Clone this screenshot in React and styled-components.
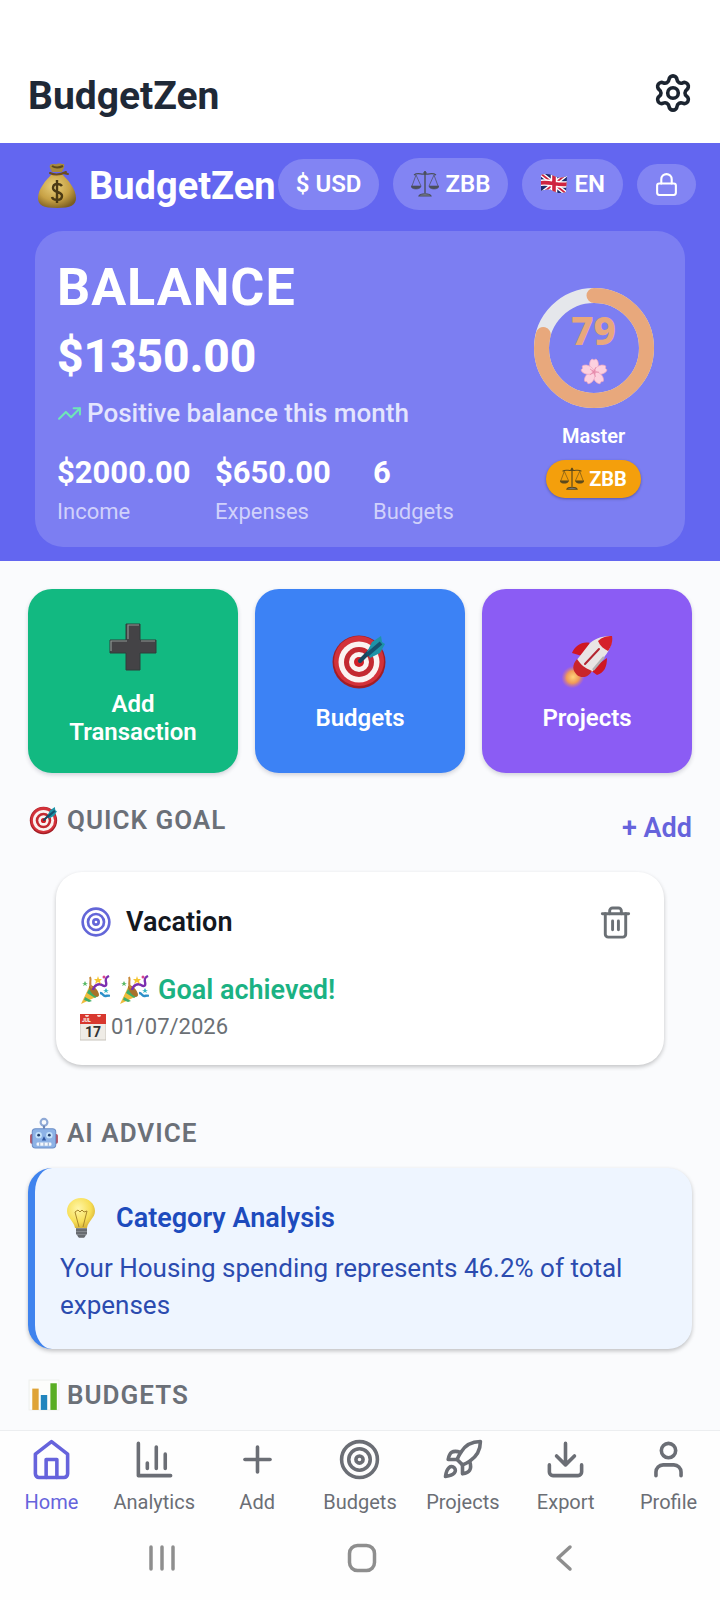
import React from 'react'
import styled, { createGlobalStyle } from 'styled-components'
import { Lock, TrendingUp, Trash2, Target, Plus, Rocket, User } from 'lucide-react'


const actions = [
  { title: 'Add Transaction', color: '#12b981', icon: 'plus' },
  { title: 'Budgets', color: '#3c82f5', icon: 'dart' },
  { title: 'Projects', color: '#8b5cf4', icon: 'rocket' },
];

const stats = [
  { value: '$2000.00', label: 'Income' },
  { value: '$650.00', label: 'Expenses' },
  { value: '6', label: 'Budgets' },
];

const score = 79;

const Line = ({ size = 43, children }) => (
  <svg width={size} height={size} viewBox="0 0 24 24" fill="none" stroke="currentColor"
    strokeWidth="2" strokeLinecap="round" strokeLinejoin="round" aria-hidden="true">
    {children}
  </svg>
)

const HomeIcon = () => (
  <Line>
    <path d="M3 9l9-7 9 7v11a2 2 0 0 1-2 2H5a2 2 0 0 1-2-2z" />
    <path d="M9 22V12h6v10" />
  </Line>
)

const AnalyticsIcon = () => (
  <Line>
    <path d="M3 3v18h18" />
    <path d="M18 17V9M13 17V5M8 17v-3" />
  </Line>
)

const ExportIcon = () => (
  <Line>
    <path d="M21 15v4a2 2 0 0 1-2 2H5a2 2 0 0 1-2-2v-4" />
    <path d="M7 10l5 5 5-5M12 15V3" />
  </Line>
)

const Gear = () => (
  <svg width="42" height="42" viewBox="-21 -21 42 42" fill="none" stroke="currentColor"
    strokeWidth="3.6" strokeLinejoin="round" aria-hidden="true">
    <path d="M-3.98-13.55A4 4 0 0 1 3.98-13.55A4.06 4.06 0 0 0 9.74-10.22A4 4 0 0 1 13.72-3.33A4.06 4.06 0 0 0 13.72 3.33A4 4 0 0 1 9.74 10.22A4.06 4.06 0 0 0 3.98 13.55A4 4 0 0 1-3.98 13.55A4.06 4.06 0 0 0-9.74 10.22A4 4 0 0 1-13.72 3.33A4.06 4.06 0 0 0-13.72-3.33A4 4 0 0 1-9.74-10.22A4.06 4.06 0 0 0-3.98-13.55z" />
    <circle r="5.3" />
  </svg>
)

const tabs = [
  { title: 'Home', icon: <HomeIcon />, active: true },
  { title: 'Analytics', icon: <AnalyticsIcon /> },
  { title: 'Add', icon: <Plus size={43} /> },
  { title: 'Budgets', icon: <Target size={43} /> },
  { title: 'Projects', icon: <Rocket size={43} /> },
  { title: 'Export', icon: <ExportIcon /> },
  { title: 'Profile', icon: <User size={43} /> },
];

const MoneyBag = () => (
  <svg width="40" height="46" viewBox="0 0 40 46" aria-hidden="true">
    <defs>
      <radialGradient id="bag" cx="0.42" cy="0.35" r="0.7">
        <stop offset="0" stopColor="#e9cf7c" />
        <stop offset="0.6" stopColor="#c7a145" />
        <stop offset="1" stopColor="#7d5f22" />
      </radialGradient>
    </defs>
    <path d="M15 11C9 17 1 26 1 35c0 7 5 10 19 10s19-3 19-10c0-9-8-18-14-24z" fill="url(#bag)" />
    <path d="M13 2c3-2 5 0 7-1s4 0 7 0c1 3-1 5-2 8H15c-1-3-3-4-2-7z" fill="#a88a3c" />
    <path d="M15 3c3 2 7 2 11 0" stroke="#5b481c" strokeWidth="2" fill="none" />
    <path d="M13 10c4 2 10 2 16-1M26 10l5 1" stroke="#6c4c20" strokeWidth="2" strokeLinecap="round" fill="none" />
    <path d="M25 23c-2-3-9-3-9 2 0 5 9 3 9 8s-9 5-10 1M20 17v23" stroke="#4c3a14" strokeWidth="2.4" fill="none" />
  </svg>
)

const Scales = ({ size = 28, color = '#4a4f5c' }) => (
  <svg width={size} height={size} viewBox="0 0 28 28" fill="none" stroke={color} aria-hidden="true">
    <path d="M14 1v22" strokeWidth="1.4" />
    <path d="M3 5c4-3 7 0 11-1 4 1 7-2 11 1" strokeWidth="1.2" />
    <path d="M5 5L1 16M5 5l5 11M23 5l-5 11M23 5l4 11" strokeWidth="0.7" />
    <path d="M0 16h10c0 4-10 4-10 0zM18 16h10c0 4-10 4-10 0z" fill={color} strokeWidth="0.6" />
    <path d="M8 26c1-3 11-3 12 0z" fill="#7d828c" strokeWidth="1.2" />
    <circle cx="14" cy="3" r="1.2" fill={color} />
  </svg>
)

const Flag = () => (
  <svg width="28" height="22" viewBox="0 0 28 22" aria-hidden="true">
    <clipPath id="wave">
      <path d="M1 2c5-2 9-1 13 1s8 2 13 0l-1 16c-5 2-9 1-13-1s-7-2-12 0z" />
    </clipPath>
    <g clipPath="url(#wave)">
      <path d="M0 0h28v22H0z" fill="#1d2a6b" />
      <path d="M0 0l28 22M28 0L0 22" stroke="#fff" strokeWidth="4.5" />
      <path d="M0 0l28 22M28 0L0 22" stroke="#cf2440" strokeWidth="1.8" />
      <path d="M14 0v22M0 10c9-2 18 3 28 1" stroke="#fff" strokeWidth="6.5" fill="none" />
      <path d="M14 0v22M0 10c9-2 18 3 28 1" stroke="#cf2440" strokeWidth="3.6" fill="none" />
    </g>
  </svg>
)

const Blossom = () => (
  <svg width="28" height="28" viewBox="0 0 28 28" aria-hidden="true">
    {[0, 72, 144, 216, 288].map((turn) => (
      <path key={turn} d="M14 15C8 10 9 3 12 1l2 1 2-1c3 2 4 9-2 14z"
        fill="#fcd0df" stroke="#f0a9c3" strokeWidth="0.7" transform={`rotate(${turn} 14 14)`} />
    ))}
    <circle cx="14" cy="14" r="2.4" fill="#f5a9c4" />
    {[0, 72, 144, 216, 288].map((turn) => (
      <path key={turn} d="M14 14V9" stroke="#e084a5" strokeWidth="0.7" transform={`rotate(${turn + 20} 14 14)`} />
    ))}
  </svg>
)

const HeavyPlus = () => (
  <svg width="62" height="62" viewBox="0 0 62 62" aria-hidden="true">
    <path d="M24 8h14v16h16v13H38v17H24V37H8V24h16z" fill="#444346" stroke="#2f3f3b" strokeWidth="1" />
    <path d="M26 23V9h11M9 35V25h16M39 25h14" stroke="#8d9692" strokeWidth="1.2" fill="none" />
  </svg>
)

const Dart = ({ size = 62 }) => (
  <svg width={size} height={size} viewBox="0 0 62 62" aria-hidden="true">
    <circle cx="30" cy="32" r="26.5" fill="#a31d25" />
    <circle cx="30" cy="31" r="25" fill="#d3323a" />
    <circle cx="30" cy="32" r="20.5" fill="#fbf3f1" />
    <circle cx="30" cy="32" r="15" fill="#c32a31" />
    <circle cx="30" cy="32" r="10" fill="#fbf3f1" />
    <circle cx="30" cy="32" r="5" fill="#d01f28" />
    <path d="M31 31l17-17" stroke="#17485f" strokeWidth="4" strokeLinecap="round" />
    <path d="M38 22l5-10 9-6 1 6 3 2-5 9-10 5z" fill="#1e93a7" />
    <path d="M38 25L52 13" stroke="#15526f" strokeWidth="4" />
  </svg>
)

const RocketShip = () => (
  <svg width="62" height="62" viewBox="0 0 62 62" aria-hidden="true">
    <defs>
      <radialGradient id="flame">
        <stop offset="0" stopColor="#ffd27a" />
        <stop offset="0.55" stopColor="#f09a58" />
        <stop offset="1" stopColor="#d9748a" stopOpacity="0" />
      </radialGradient>
    </defs>
    <ellipse cx="17" cy="47" rx="12" ry="11" fill="url(#flame)" transform="rotate(-35 17 47)" />
    <path d="M34 13c-8-2-15 3-18 10l10 3zM51 28c0 9-3 15-10 17l-7-5z" fill="#cf1722" />
    <path d="M20 31l14-18c7-6 14-7 22-7 0 7-2 14-7 20L36 42c-6 2-16-4-16-11z" fill="#e9e4e4" />
    <path d="M42 11c4-4 9-5 14-5 1 6-1 11-4 15-4-2-8-5-10-10z" fill="#d5202a" />
    <path d="M21 29c4 6 8 9 15 12-3 6-10 8-15 4-5-5-5-10 0-16z" fill="#c9252c" />
    <path d="M29 34L43 19" stroke="#b32530" strokeWidth="2" strokeLinecap="round" />
    <path d="M37 40l11-13" stroke="#b5b0b3" strokeWidth="2.5" />
  </svg>
)

const Party = () => (
  <svg width="30" height="30" viewBox="0 0 30 30" aria-hidden="true">
    <path d="M10 10L1 29l17-8c-1-5-3-9-8-11z" fill="#efbb3b" />
    <path d="M9 14l-2 4 8 5 3-2zM5 22l-1 3 5 2 3-1z" fill="#3fae68" />
    <ellipse cx="14" cy="16" rx="3" ry="7" transform="rotate(-40 14 16)" fill="#a8722b" />
    <path d="M13 15c1-5 6-7 9-5s5 1 4-3 1-5 3-6" stroke="#7b2fb0" strokeWidth="2.4" fill="none" />
    <path d="M12 13C8 9 12 6 10 2" stroke="#c98a3a" strokeWidth="2" fill="none" />
    <path d="M20 18c3 0 3 3 5 3s3-1 5 0" stroke="#2c8fc9" strokeWidth="2.4" fill="none" />
    <path d="M18 1l1 3h3l-2 2 1 3-3-2-3 2 1-3-2-2h3z" fill="#f5c630" />
    <path d="M5 6l1 2h2L6 9l1 2-2-1-2 1 1-2-2-1h2z" fill="#59b966" />
    <path d="M26 13l1 2h2l-2 1 1 2-2-1-2 1 1-2-2-1h2z" fill="#35b3c0" />
    <circle cx="24" cy="2" r="1.5" fill="#d9468d" />
  </svg>
)

const Calendar = () => (
  <svg width="26" height="27" viewBox="0 0 26 27" aria-hidden="true">
    <path d="M0 1h26v25H0z" fill="#efece6" stroke="#c8c4bc" strokeWidth="1" />
    <path d="M0 0h26v10H0z" fill="#d8382f" />
    <path d="M5 1a2 2 0 0 0 4 0M17 1a2 2 0 0 0 4 0" fill="#f4dcd8" />
    <text x="2" y="8" fill="#fff" fontSize="5" fontWeight="700" fontFamily="Roboto, sans-serif">JUL</text>
    <text x="13" y="23" fill="#333" fontSize="14" fontWeight="700" textAnchor="middle" fontFamily="Roboto, sans-serif">17</text>
  </svg>
)

const Robot = () => (
  <svg width="30" height="30" viewBox="0 0 30 30" aria-hidden="true">
    <circle cx="15" cy="5" r="3.2" fill="none" stroke="#8fa9d6" strokeWidth="2" />
    <path d="M15 8v4" stroke="#7087b3" strokeWidth="2" />
    <rect x="2" y="16" width="4" height="9" rx="1.5" fill="#b04a5c" />
    <rect x="24" y="16" width="4" height="9" rx="1.5" fill="#b04a5c" />
    <rect x="4" y="11" width="22" height="18" rx="3" fill="#8db2e6" stroke="#6d8fc8" strokeWidth="1" />
    <circle cx="10" cy="17" r="3" fill="#c4e2fb" />
    <circle cx="20" cy="17" r="3" fill="#c4e2fb" />
    <circle cx="10" cy="17" r="1.3" fill="#25406e" />
    <circle cx="20" cy="17" r="1.3" fill="#25406e" />
    <path d="M15 18l-2 4h4z" fill="#2d559f" />
    <rect x="8" y="24" width="14" height="3" rx="1" fill="#f3f7fc" />
    <path d="M11 24v3M15 24v3M19 24v3" stroke="#7e97bf" strokeWidth="0.8" />
  </svg>
)

const Bulb = () => (
  <svg width="42" height="42" viewBox="0 0 42 42" aria-hidden="true">
    <defs>
      <radialGradient id="glow" cx="0.4" cy="0.35" r="0.65">
        <stop offset="0" stopColor="#fff6a8" />
        <stop offset="0.7" stopColor="#f7de55" />
        <stop offset="1" stopColor="#dcb83a" />
      </radialGradient>
    </defs>
    <path d="M21 1C13 1 7 7 7 14c0 7 7 10 8 17h12c1-7 8-10 8-17 0-7-6-13-14-13z" fill="url(#glow)" />
    <path d="M19 30l-4-15 3-2 2 2 2-2 2 2 3-1-4 16" stroke="#a8862a" strokeWidth="1" fill="none" />
    <path d="M16 31h11v6l-3 4h-5l-3-4z" fill="#85898e" />
    <path d="M16 33h11M16 36h11M18 39h7" stroke="#4b4f55" strokeWidth="1" />
  </svg>
)

const Chart = () => (
  <svg width="30" height="30" viewBox="0 0 30 30" aria-hidden="true">
    <rect x="1" y="1" width="28" height="28" fill="#fdfdfb" stroke="#eff0ee" strokeWidth="1" />
    <rect x="4" y="9" width="6" height="20" fill="#dfa336" />
    <rect x="12" y="15" width="6" height="14" fill="#2185bd" />
    <rect x="21" y="4" width="6" height="25" fill="#59ad22" />
  </svg>
)

const actionIcons = {
  plus: <HeavyPlus />,
  dart: <Dart />,
  rocket: <RocketShip />,
};

const ScoreRing = ({ value }) => {
  const length = 2 * Math.PI * 52.5;

  return (
    <Ring>
      <svg width="120" height="120" viewBox="0 0 120 120" aria-hidden="true">
        <circle cx="60" cy="60" r="52.5" fill="none" stroke="#e5e7eb" strokeWidth="15" />
        <circle cx="60" cy="60" r="52.5" fill="none" stroke="#e8a87c" strokeWidth="15" strokeLinecap="round"
          strokeDasharray={`${length * value / 100} ${length}`} transform="rotate(-90 60 60)" />
      </svg>
      <RingText>
        <Score>{value}</Score>
        <Blossom />
      </RingText>
    </Ring>
  )
}

const App = () => (
  <>
    <GlobalStyle />
    <Page>
      <TopBar>
        <AppTitle>BudgetZen</AppTitle>
        <IconButton aria-label="Settings"><Gear /></IconButton>
      </TopBar>

      <Hero>
        <BrandRow>
          <Brand><MoneyBag />BudgetZen</Brand>
          <Pills>
            <Pill>$ USD</Pill>
            <Pill><Scales />ZBB</Pill>
            <Pill><Flag />EN</Pill>
            <Pill $small aria-label="Lock"><Lock size={25} /></Pill>
          </Pills>
        </BrandRow>

        <BalanceCard>
          <div>
            <BalanceTitle>BALANCE</BalanceTitle>
            <Amount>$1350.00</Amount>
            <Trend><TrendingUp size={25} color="#6ee7b7" />Positive balance this month</Trend>
            <Stats>
              {stats.map(({ value, label }) => (
                <div key={label}>
                  <StatValue>{value}</StatValue>
                  <StatLabel>{label}</StatLabel>
                </div>
              ))}
            </Stats>
          </div>
          <Level>
            <ScoreRing value={score} />
            <LevelName>Master</LevelName>
            <Badge><Scales size={24} color="#5c4a1c" />ZBB</Badge>
          </Level>
        </BalanceCard>
      </Hero>

      <Main>
        <Actions>
          {actions.map(({ title, color, icon }) => (
            <Action key={title} $color={color}>
              {actionIcons[icon]}
              <span>{title}</span>
            </Action>
          ))}
        </Actions>

        <SectionHead>
          <SectionTitle><Dart size={34} />QUICK GOAL</SectionTitle>
          <AddButton>+ Add</AddButton>
        </SectionHead>
        <GoalCard>
          <GoalRow>
            <Target size={32} color="#6366d8" />
            <GoalName>Vacation</GoalName>
            <IconButton $muted aria-label="Delete goal"><Trash2 size={35} /></IconButton>
          </GoalRow>
          <Achieved><Party /><Party />Goal achieved!</Achieved>
          <DueDate><Calendar />01/07/2026</DueDate>
        </GoalCard>

        <SectionTitle><Robot />AI ADVICE</SectionTitle>
        <AdviceCard>
          <AdviceTitle><Bulb />Category Analysis</AdviceTitle>
          <AdviceText>Your Housing spending represents 46.2% of total expenses</AdviceText>
        </AdviceCard>

        <SectionTitle><Chart />BUDGETS</SectionTitle>
      </Main>

      <Footer>
        <TabBar>
          {tabs.map(({ title, icon, active }) => (
            <Tab key={title} href="#" $active={active}>
              {icon}
              {title}
            </Tab>
          ))}
        </TabBar>
        <SystemBar>
          <SystemButton aria-label="Recent apps">
            <svg width="32" height="32" viewBox="0 0 32 32"><path d="M5 5v22M16 5v22M27 5v22" /></svg>
          </SystemButton>
          <SystemButton aria-label="Home screen">
            <svg width="32" height="32" viewBox="0 0 32 32"><rect x="3.5" y="3.5" width="25" height="25" rx="8" /></svg>
          </SystemButton>
          <SystemButton aria-label="Back">
            <svg width="32" height="32" viewBox="0 0 32 32"><path d="M24 5L12 16l12 11" /></svg>
          </SystemButton>
        </SystemBar>
      </Footer>
    </Page>
  </>
)

export default App

const GlobalStyle = createGlobalStyle`
  * {
    box-sizing: border-box;
  }
  body {
    margin: 0;
    background: #fafbfd;
    font-family: Roboto, sans-serif;
  }
  button {
    font-family: inherit;
    border: 0;
    padding: 0;
    background: none;
    cursor: pointer;
  }
  svg {
    display: block;
    flex-shrink: 0;
  }
`;

const Page = styled.div`
  min-height: 100vh;
  display: flex;
  flex-direction: column;
`;

const TopBar = styled.header`
  display: flex;
  align-items: flex-start;
  justify-content: space-between;
  padding: 72px 26px 23px 28px;
  background: #fff;
  color: #1f2937;
`;

const AppTitle = styled.h1`
  margin: 0;
  font-size: 39px;
  line-height: 48px;
  font-weight: 700;
`;

const IconButton = styled.button`
  color: ${({ $muted }) => ($muted ? '#6b7075' : '#1b2430')};
`;

const Hero = styled.section`
  padding: 15px 35px 14px;
  background: #6366f0;
  color: #fff;
`;

const BrandRow = styled.div`
  display: flex;
  align-items: center;
  justify-content: space-between;
  margin: 0 -11px 21px 2px;
`;

const Brand = styled.div`
  display: flex;
  align-items: center;
  gap: 12px;
  padding-top: 3px;
  font-size: 38px;
  line-height: 48px;
  font-weight: 700;
`;

const Pills = styled.div`
  display: flex;
  align-items: center;
  gap: 14px;
`;

const Pill = styled.button`
  display: flex;
  align-items: center;
  gap: 6px;
  padding: ${({ $small }) => ($small ? '8px 17px' : '12px 18px')};
  border-radius: 26px;
  background: rgba(255, 255, 255, 0.2);
  color: #fff;
  font-size: 24px;
  line-height: 27px;
  font-weight: 600;
`;

const BalanceCard = styled.div`
  display: grid;
  grid-template-columns: 1fr 125px;
  align-items: center;
  padding: 29px 29px 21px 22px;
  border-radius: 28px;
  background: rgba(255, 255, 255, 0.16);
`;

const BalanceTitle = styled.h2`
  margin: 0 0 12px;
  font-size: 52px;
  line-height: 56px;
  font-weight: 700;
  letter-spacing: 1px;
`;

const Amount = styled.div`
  font-size: 46px;
  line-height: 56px;
  font-weight: 800;
`;

const Trend = styled.div`
  display: flex;
  align-items: center;
  gap: 5px;
  margin: 13px 0 26px;
  font-size: 26px;
  line-height: 32px;
  font-weight: 500;
  color: #e4e5fd;
`;

const Stats = styled.div`
  display: grid;
  grid-template-columns: repeat(3, 1fr);
`;

const StatValue = styled.div`
  font-size: 31px;
  line-height: 36px;
  font-weight: 700;
`;

const StatLabel = styled.div`
  margin-top: 7px;
  font-size: 22px;
  line-height: 28px;
  color: #d0d1fb;
`;

const Level = styled.div`
  display: flex;
  flex-direction: column;
  align-items: center;
`;

const Ring = styled.div`
  display: grid;
  place-items: center;

  > * {
    grid-area: 1 / 1;
  }
`;

const RingText = styled.div`
  display: flex;
  flex-direction: column;
  align-items: center;
  gap: 8px;
`;

const Score = styled.div`
  font-family: 'Noto Sans', sans-serif;
  font-size: 39px;
  line-height: 40px;
  font-weight: 800;
  color: #e8a87c;
`;

const LevelName = styled.div`
  margin: 16px 0 12px;
  font-size: 20px;
  line-height: 24px;
  font-weight: 600;
`;

const Badge = styled.div`
  display: flex;
  align-items: center;
  gap: 5px;
  padding: 6px 14px;
  border-radius: 20px;
  background: #f49f0c;
  box-shadow: 0 1px 3px rgba(0, 0, 0, 0.3);
  font-size: 20px;
  line-height: 26px;
  font-weight: 700;
`;

const Main = styled.main`
  flex: 1;
  padding: 28px 28px 10px;
`;

const Actions = styled.div`
  display: grid;
  grid-template-columns: repeat(3, 1fr);
  gap: 17px;
`;

const Action = styled.button`
  display: flex;
  flex-direction: column;
  align-items: center;
  justify-content: center;
  gap: 12px;
  min-height: 184px;
  padding: 24px;
  border-radius: 24px;
  background: ${({ $color }) => $color};
  box-shadow: 0 2px 4px rgba(30, 30, 60, 0.18);
  color: #fff;
  font-size: 24px;
  line-height: 28px;
  font-weight: 600;
`;

const SectionHead = styled.div`
  display: flex;
  align-items: flex-end;
  justify-content: space-between;
  margin: 31px 0 28px;
`;

const SectionTitle = styled.h3`
  display: flex;
  align-items: center;
  gap: 7px;
  margin: 0 0 8px;
  font-size: 26px;
  line-height: 32px;
  font-weight: 600;
  letter-spacing: 1px;
  color: #6b7078;

  > svg {
    width: 32px;
    height: 32px;
  }
`;

const AddButton = styled.button`
  font-size: 27px;
  line-height: 32px;
  font-weight: 600;
  color: #6663dc;
`;

const GoalCard = styled.article`
  margin: 0 28px 52px;
  padding: 32px 31px 24px 24px;
  border-radius: 26px;
  background: #fff;
  box-shadow: 0 2px 4px rgba(0, 0, 0, 0.22);
`;

const GoalRow = styled.div`
  display: flex;
  align-items: center;
  gap: 14px;
  height: 36px;
  margin-bottom: 34px;
`;

const GoalName = styled.h4`
  flex: 1;
  margin: 0;
  font-size: 27px;
  line-height: 32px;
  font-weight: 600;
  color: #14181f;
`;

const Achieved = styled.p`
  display: flex;
  align-items: center;
  gap: 9px;
  margin: 0 0 7px;
  font-size: 27px;
  line-height: 32px;
  font-weight: 600;
  color: #1bb283;
`;

const DueDate = styled.p`
  display: flex;
  align-items: center;
  gap: 5px;
  margin: 0;
  font-size: 22px;
  line-height: 28px;
  color: #6b7075;
`;

const AdviceCard = styled.article`
  margin: 19px 0 30px;
  padding: 29px 24px 25px 25px;
  border-left: 7px solid #3f83ee;
  border-radius: 24px;
  background: #eef5ff;
  box-shadow: 0 2px 4px rgba(0, 0, 0, 0.24);
`;

const AdviceTitle = styled.h4`
  display: flex;
  align-items: center;
  gap: 14px;
  margin: 0 0 11px;
  font-size: 27px;
  line-height: 32px;
  font-weight: 600;
  color: #1d4bbd;
`;

const AdviceText = styled.p`
  margin: 0;
  font-size: 26px;
  line-height: 37px;
  color: #2b4baf;
`;

const Footer = styled.footer`
  background: #fefefe;
  border-top: 1px solid #eceef0;
`;

const TabBar = styled.nav`
  display: grid;
  grid-template-columns: repeat(7, 1fr);
  padding-top: 7px;
`;

const Tab = styled.a`
  display: flex;
  flex-direction: column;
  align-items: center;
  gap: 9px;
  font-size: 20px;
  line-height: 24px;
  text-decoration: none;
  color: ${({ $active }) => ($active ? '#6663dc' : '#6b6e75')};
`;

const SystemBar = styled.div`
  display: grid;
  grid-template-columns: repeat(3, 1fr);
  padding: 28px 58px 26px 62px;
`;

const SystemButton = styled.button`
  display: flex;
  justify-content: center;

  svg {
    fill: none;
    stroke: #8e8e8e;
    stroke-width: 3.5;
    stroke-linecap: round;
    stroke-linejoin: round;
  }
`;
